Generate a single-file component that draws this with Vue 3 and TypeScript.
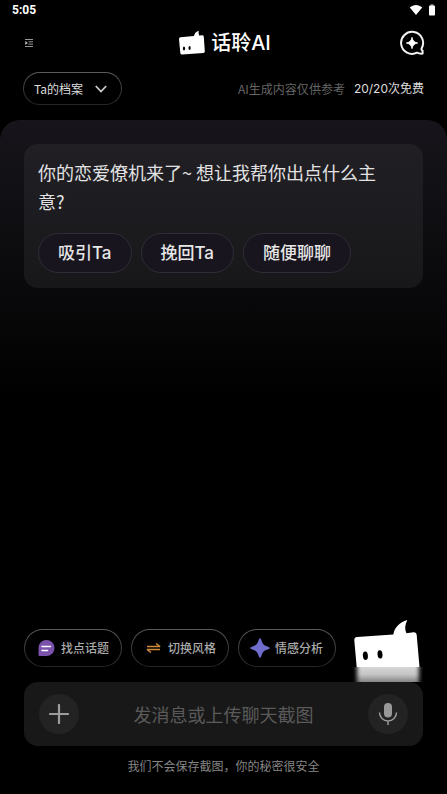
<script setup lang="ts">
import { ref } from 'vue'

const profile = ref('Ta的档案')
const message = ref('')
const starters: string[] = ['吸引Ta', '挽回Ta', '随便聊聊']

interface Tool {
  id: 'topic' | 'style' | 'emotion'
  label: string
}

const tools: Tool[] = [
  { id: 'topic', label: '找点话题' },
  { id: 'style', label: '切换风格' },
  { id: 'emotion', label: '情感分析' },
]
</script>

<template>
  <div class="app">
    <div class="status">
      <span class="clock">5:05</span>
      <span class="status-icons">
        <svg width="14" height="12" viewBox="0 0 14 12" aria-hidden="true">
          <path d="M.8 3.600C4.200 .2 9.800 .2 13.200 3.600L7 11Z" fill="#fff" />
        </svg>
        <svg width="6" height="12" viewBox="0 0 6 12" aria-hidden="true">
          <path d="M1.500 0h3v2h-3z" fill="#777" />
          <rect y="1.500" width="6" height="10" rx=".8" fill="#fff" />
        </svg>
      </span>
    </div>

    <header class="header">
      <button class="icon-btn menu" type="button" aria-label="菜单">
        <svg width="8" height="8" viewBox="0 0 8 8" aria-hidden="true">
          <path d="M0 .5h8M3.500 2.800h4.500M3.500 5.100h4.500M0 7.500h8" stroke="#a8a8a8" stroke-width=".9" />
          <path d="M.3 2v4L2.800 4z" fill="#c4c4c4" />
        </svg>
      </button>
      <h1 class="brand">
        <svg width="27" height="26" viewBox="0 0 27 26" aria-hidden="true">
          <path
            d="M2.500 7.300 16 6C16.500 3 18.500 1.300 20.800.7c-.5 1.600-.2 3.200.4 4.800l3-.2q1.400 0 1.600 1.400l1 14.600q0 1.500-1.400 1.600L4 24.500q-1.500 0-1.700-1.500L1 9q0-1.500 1.500-1.700Z"
            fill="#fff"
          />
          <ellipse cx="6" cy="18.400" rx="1.100" ry="2" fill="#000" />
          <ellipse cx="11.600" cy="17.900" rx="1.100" ry="2" fill="#000" />
        </svg>
        <span>话聆AI</span>
      </h1>
      <button class="icon-btn new-chat" type="button" aria-label="新对话">
        <svg width="26" height="26" viewBox="0 0 26 26" aria-hidden="true">
          <path
            d="M22.700 18.200A11 11 0 1 0 18 22.700Q20.500 23.900 23.600 23.600V20.800Q22 19.800 22.700 18.200"
            fill="none"
            stroke="#f2f2f2"
            stroke-width="2"
            stroke-linejoin="round"
          />
          <path d="M13 7.300Q13.800 12.200 18.700 13 13.800 13.800 13 18.700 12.200 13.800 7.300 13 12.200 12.200 13 7.300Z" fill="#fff" stroke="#fff" stroke-width=".8" />
        </svg>
      </button>
    </header>

    <div class="meta">
      <div class="profile outlined">
        <select v-model="profile" aria-label="档案">
          <option>Ta的档案</option>
        </select>
        <svg class="chevron" width="12" height="8" viewBox="0 0 12 8" aria-hidden="true">
          <path d="M.8 1 6 6.500 11.200 1" fill="none" stroke="#ccc" stroke-width="1.800" />
        </svg>
      </div>
      <p class="quota"><span class="note">AI生成内容仅供参考</span><span class="count">20/20次免费</span></p>
    </div>

    <main class="chat">
      <section class="card">
        <p class="greeting">你的恋爱僚机来了~ 想让我帮你出点什么主意?</p>
        <div class="starters">
          <button v-for="item in starters" :key="item" type="button" class="starter">{{ item }}</button>
        </div>
      </section>
    </main>

    <footer class="dock">
      <div class="tools">
        <button v-for="tool in tools" :key="tool.id" type="button" class="tool outlined">
          <svg v-if="tool.id === 'topic'" width="17" height="18" viewBox="0 0 17 18" aria-hidden="true">
            <path d="M8.500 1a8 8 0 1 1 0 16H1.500Q.5 17 .5 16V9A8 8 0 0 1 8.500 1Z" fill="#7b52ab" />
            <path d="M4 7.500h8.500M4 11.500h5.500" stroke="#fff" stroke-width="1.500" stroke-linecap="round" />
          </svg>
          <svg v-else-if="tool.id === 'style'" width="17" height="18" viewBox="0 0 17 18" aria-hidden="true">
            <path d="M2 7.500h13L11 4.500M15 10.500H2L6 13.500" fill="none" stroke="#cf8a3c" stroke-width="1.500" stroke-linejoin="bevel" />
          </svg>
          <svg v-else class="star" width="20" height="20" viewBox="0 0 20 20" aria-hidden="true">
            <path d="M10 .3Q11 .3 11.500 2.500 12.700 7.300 17.500 8.500 19.700 9 19.700 10T17.500 11.500Q12.700 12.700 11.500 17.500 11 19.700 10 19.700T8.500 17.500Q7.300 12.700 2.500 11.500.3 11 .3 10T2.500 8.500Q7.300 7.300 8.500 2.500 9 .3 10 .3Z" fill="#706dcc" />
          </svg>
          <span>{{ tool.label }}</span>
        </button>
        <svg class="mascot" width="71" height="64" viewBox="0 0 71 64" aria-hidden="true">
          <defs>
            <linearGradient id="fade" x1="0" y1="0" x2="0" y2="1">
              <stop offset="0" stop-color="#d8d8d8" />
              <stop offset=".5" stop-color="#c4c4c4" />
              <stop offset="1" stop-color="#858585" />
            </linearGradient>
            <filter id="soft" x="-20%" y="-20%" width="140%" height="140%">
              <feGaussianBlur stdDeviation="2 0" />
            </filter>
          </defs>
          <path
            d="M5 18.900 41.300 16.400C42.500 9.500 47.500 4.300 55.300 2 52.800 7 52.500 11.500 54.500 15.200L61.500 14.200Q64.300 14 64.700 17L67.500 49H4.700L2.300 22.300Q2.100 19.300 5 18.900Z"
            fill="#fff"
          />
          <ellipse cx="13.400" cy="37.800" rx="2.500" ry="4.200" fill="#000" transform="rotate(-5 13.400 37.800)" />
          <ellipse cx="28" cy="36.400" rx="2.500" ry="4.200" fill="#000" transform="rotate(-5 28 36.400)" />
          <rect x="5" y="49" width="62" height="15" fill="url(#fade)" filter="url(#soft)" />
        </svg>
      </div>

      <form class="composer" @submit.prevent>
        <button class="round" type="button" aria-label="上传截图">
          <svg width="20" height="20" viewBox="0 0 20 20" aria-hidden="true">
            <path d="M10 1v18M1 10h18" stroke="#9c9c9c" stroke-width="2.200" stroke-linecap="round" />
          </svg>
        </button>
        <input v-model="message" type="text" aria-label="消息" placeholder="发消息或上传聊天截图" />
        <button class="round" type="button" aria-label="语音输入">
          <svg width="20" height="24" viewBox="0 0 20 24" aria-hidden="true">
            <rect x="6" y="1" width="8" height="14.500" rx="4" fill="#999" />
            <path d="M1.500 10.500a8.500 8.500 0 0 0 17 0M10 19v4" fill="none" stroke="#999" stroke-width="1.500" />
          </svg>
        </button>
      </form>
      <p class="privacy">我们不会保存截图，你的秘密很安全</p>
    </footer>
  </div>
</template>

<style>
body {
  margin: 0;
  background: #000;
}
</style>

<style scoped>
.app {
  display: flex;
  flex-direction: column;
  min-height: 100vh;
  background: #000;
  color: #ddd;
  font-family: 'Noto Sans CJK SC', sans-serif;
  font-size: 12px;
  line-height: 16px;
}

button,
input,
select {
  margin: 0;
  padding: 0;
  border: 0;
  background: none;
  color: inherit;
  font: inherit;
}

p,
h1 {
  margin: 0;
}

svg {
  display: block;
  flex: none;
}

.status {
  display: flex;
  align-items: center;
  justify-content: space-between;
  height: 20px;
  padding: 0 12px;
}

.clock {
  color: #fff;
  font-family: Roboto, sans-serif;
  font-weight: 700;
}

.status-icons {
  display: flex;
  align-items: center;
  gap: 6px;
}

.header {
  display: grid;
  grid-template-columns: 1fr auto 1fr;
  align-items: center;
  height: 45px;
  padding: 0 22px;
}

.icon-btn {
  display: flex;
}

.menu {
  padding: 3px;
}

.new-chat {
  justify-self: end;
}

.brand,
.count,
.starter {
  font-family: Inter, 'Noto Sans CJK SC', sans-serif;
}

.brand {
  display: flex;
  align-items: center;
  gap: 6px;
  padding-left: 2px;
  color: #fff;
  font-size: 20px;
  font-weight: 500;
  line-height: 28px;
}

.meta {
  display: flex;
  align-items: center;
  justify-content: space-between;
  padding: 7px 23px 15px;
}

.outlined {
  border: 1px solid transparent;
  border-radius: 20px;
  background:
    linear-gradient(#000, #000) padding-box,
    linear-gradient(#5c5c5c, #242424) border-box;
}

.profile {
  display: grid;
  align-items: center;
}

.profile select {
  grid-area: 1 / 1;
  height: 31px;
  padding: 0 38px 0 10px;
  border-radius: 16px;
  appearance: none;
}

.profile option {
  color: #ddd;
  background: #181818;
}

.chevron {
  grid-area: 1 / 1;
  justify-self: end;
  margin-right: 14px;
  pointer-events: none;
}

.quota {
  display: flex;
  gap: 9px;
}

.note {
  color: #666;
}

.chat {
  flex: 1;
  padding: 24px;
  border-radius: 20px 20px 0 0;
  background: linear-gradient(#17151b, #09090b 170px, #000 280px);
}

.card {
  padding: 14px 14px 15px;
  border-radius: 14px;
  background: linear-gradient(rgba(255, 255, 255, 0.05), rgba(255, 255, 255, 0.06));
}

.greeting {
  padding-right: 28px;
  color: #e2e2e2;
  font-size: 18px;
  line-height: 29px;
}

.starters {
  display: flex;
  flex-wrap: wrap;
  gap: 9px;
  margin-top: 17px;
}

.starter {
  height: 40px;
  padding: 0 19px;
  border: 1px solid #302d38;
  border-radius: 20px;
  background: #18151f;
  color: #e6e6e6;
  font-size: 17px;
  font-weight: 500;
}

.dock {
  padding: 0 24px 20px;
}

.tools {
  display: flex;
  align-items: flex-end;
  gap: 9px;
}

.tool {
  display: flex;
  align-items: center;
  gap: 6px;
  height: 38px;
  margin-bottom: 15px;
  padding: 0 12px 0 13px;
  color: #aaa;
  font-weight: 500;
  white-space: nowrap;
}

.star {
  margin: 0 -1px 0 -2px;
}

.mascot {
  margin-left: auto;
}

.composer {
  display: flex;
  align-items: center;
  height: 64px;
  padding: 0 15px;
  border-radius: 14px;
  background: #181818;
}

.round {
  display: flex;
  flex: none;
  align-items: center;
  justify-content: center;
  width: 40px;
  height: 40px;
  border-radius: 50%;
  background: #232323;
}

.composer input {
  flex: 1;
  min-width: 0;
  height: 40px;
  outline: none;
  font-size: 18px;
  text-align: center;
}

.composer input::placeholder {
  color: #5a5a5a;
  opacity: 1;
}

.privacy {
  margin-top: 12px;
  color: #858585;
  text-align: center;
}
</style>
